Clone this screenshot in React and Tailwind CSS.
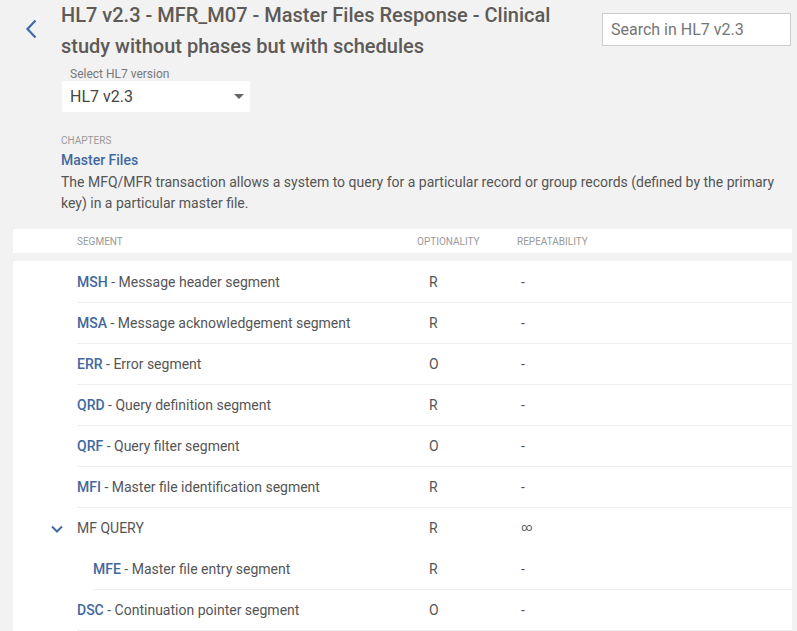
import React from "react";

const segments = [
  { code: "MSH", name: "Message header segment", opt: "R", rep: "-" },
  { code: "MSA", name: "Message acknowledgement segment", opt: "R", rep: "-" },
  { code: "ERR", name: "Error segment", opt: "O", rep: "-" },
  { code: "QRD", name: "Query definition segment", opt: "R", rep: "-" },
  { code: "QRF", name: "Query filter segment", opt: "O", rep: "-" },
  { code: "MFI", name: "Master file identification segment", opt: "R", rep: "-" },
  { group: "MF QUERY", opt: "R", rep: "∞" },
  { code: "MFE", name: "Master file entry segment", opt: "R", rep: "-", nested: true },
  { code: "DSC", name: "Continuation pointer segment", opt: "O", rep: "-" },
];

// Row for a single segment or a group header
const SegmentRow = ({ seg }) => {
  if (seg.group) {
    return (
      <div className="flex items-center h-[41px]">
        <div className="w-[64px] flex justify-end pr-[13px]">
          <svg width="14" height="10" viewBox="0 0 14 10" fill="none">
            <path d="M2 2.5 L7 7.5 L12 2.5" stroke="#3f69a8" strokeWidth="2" />
          </svg>
        </div>
        <div className="w-[340px] text-[14px] text-[#555]">{seg.group}</div>
        <div className="w-[100px] pl-[12px] text-[14px] text-[#555]">{seg.opt}</div>
        <div className="pl-[4px] text-[11px] text-[#555]">{seg.rep}</div>
      </div>
    );
  }

  return (
    <div className={`flex ${seg.nested ? "pl-[80px]" : "pl-[64px]"}`}>
      <div className="flex-1 flex items-center h-[41px] border-b border-[#eeeeee]">
        <div className={`${seg.nested ? "w-[324px]" : "w-[340px]"} text-[14px] text-[#555]`}>
          <span className="font-medium text-[#41689f]">{seg.code}</span> - {seg.name}
        </div>
        <div className="w-[100px] pl-[12px] text-[14px] text-[#555]">{seg.opt}</div>
        <div className="pl-[4px] text-[14px] text-[#555]">{seg.rep}</div>
      </div>
    </div>
  );
};

export default function App() {
  return (
    <div className="min-h-screen bg-[#f2f2f2] font-['Roboto',sans-serif] overflow-hidden">
      {/* Header */}
      <div className="flex">
        <div className="w-[61px] pl-[25px] pt-[19px]">
          <svg width="13" height="20" viewBox="0 0 13 20" fill="none">
            <path d="M10.5 1.5 L2.5 10 L10.5 18.5" stroke="#3f69a8" strokeWidth="2.2" />
          </svg>
        </div>
        <div className="w-[530px]">
          <h1 className="text-[20px] leading-[31px] font-medium text-[#5d5a57]">
            HL7 v2.3 - MFR_M07 - Master Files Response - Clinical study without phases but with schedules
          </h1>
          <div className="mt-[5px] pl-[9px] text-[12px] leading-[14px] text-[#777]">Select HL7 version</div>
          <div className="ml-[1px] w-[188px] h-[31px] bg-white flex items-center justify-between pl-[8px] pr-[6px]">
            <span className="text-[16px] text-[#444]">HL7 v2.3</span>
            <svg width="10" height="5" viewBox="0 0 10 5">
              <path d="M0 0 L10 0 L5 5 Z" fill="#666" />
            </svg>
          </div>
        </div>
        <div className="ml-[11px] pt-[13px]">
          <input
            className="w-[189px] h-[33px] bg-white border border-[#cccccc] px-[8px] text-[16px] text-[#444] placeholder:text-[#757575] outline-none"
            placeholder="Search in HL7 v2.3"
          />
        </div>
      </div>

      {/* Chapter */}
      <div className="pl-[61px] pr-[14px] mt-[22px]">
        <div className="text-[10px] leading-[14px] text-[#999] uppercase">Chapters</div>
        <div className="mt-[2px] text-[14px] leading-[20px] font-medium text-[#41689f]">Master Files</div>
        <p className="mt-[2px] text-[14px] leading-[21px] text-[#555]">
          The MFQ/MFR transaction allows a system to query for a particular record or group records (defined by the primary key) in a particular master file.
        </p>
      </div>

      {/* Table header */}
      <div className="ml-[13px] w-[779px] mt-[15px] h-[24px] bg-white flex items-center pl-[64px] text-[10px] text-[#999] uppercase">
        <div className="w-[340px]">Segment</div>
        <div className="w-[100px]">Optionality</div>
        <div>Repeatability</div>
      </div>

      {/* Table body */}
      <div className="ml-[13px] w-[779px] mt-[8px] pt-[1px] bg-white">
        {segments.map((seg, i) => (
          <SegmentRow key={i} seg={seg} />
        ))}
      </div>
    </div>
  );
}
